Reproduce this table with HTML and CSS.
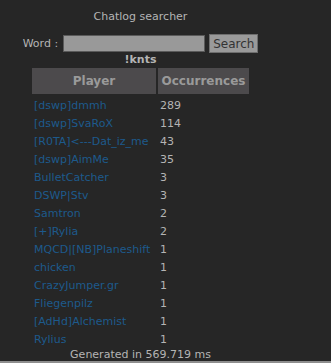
FILE: index.html
```html
<!DOCTYPE html>
<html lang="en">
<head>
    <meta charset="UTF-8">
    <title>Chatlog searcher</title>
    <link rel="stylesheet" href="styles.css">
</head>
<body>
    <div class="page">
        <div class="title">Chatlog searcher</div>
        <form class="search">
            <label for="word">Word :</label>
            <input type="text" id="word" name="word">
            <button type="submit">Search</button>
        </form>
        <div class="query">!knts</div>
        <table class="results">
            <thead>
                <tr><th class="player">Player</th><th class="count">Occurrences</th></tr>
            </thead>
            <tbody>
                <tr><td><a href="#">[dswp]dmmh</a></td><td>289</td></tr>
                <tr><td><a href="#">[dswp]SvaRoX</a></td><td>114</td></tr>
                <tr><td><a href="#">[R0TA]&lt;---Dat_iz_me</a></td><td>43</td></tr>
                <tr><td><a href="#">[dswp]AimMe</a></td><td>35</td></tr>
                <tr><td><a href="#">BulletCatcher</a></td><td>3</td></tr>
                <tr><td><a href="#">DSWP|Stv</a></td><td>3</td></tr>
                <tr><td><a href="#">Samtron</a></td><td>2</td></tr>
                <tr><td><a href="#">[+]Rylia</a></td><td>2</td></tr>
                <tr><td><a href="#">MQCD|[NB]Planeshift</a></td><td>1</td></tr>
                <tr><td><a href="#">chicken</a></td><td>1</td></tr>
                <tr><td><a href="#">CrazyJumper.gr</a></td><td>1</td></tr>
                <tr><td><a href="#">Fliegenpilz</a></td><td>1</td></tr>
                <tr><td><a href="#">[AdHd]Alchemist</a></td><td>1</td></tr>
                <tr><td><a href="#">Rylius</a></td><td>1</td></tr>
            </tbody>
        </table>
        <div class="footer">Generated in 569.719 ms</div>
    </div>
</body>
</html>
```

FILE: styles.css
```css
html, body {
    height: 100%;
}

body {
    margin: 0;
    box-sizing: border-box;
    border-bottom: 2px solid #8e8e8e;
    background-color: #262626;
    color: #b4b4b4;
    font-family: "DejaVu Sans", Verdana, sans-serif;
    font-size: 11px;
    overflow: hidden;
}

.page {
    width: 281px;
    padding-top: 10px;
    text-align: center;
}

.title {
    line-height: 13px;
    margin-bottom: 11px;
}

.search {
    display: flex;
    align-items: center;
    justify-content: center;
    margin: 0;
}

.search label {
    margin-right: 5px;
}

.search input {
    width: 138px;
    height: 13px;
    padding: 1px;
    margin: 0 4px 0 0;
    border: 1px solid #5a5a5a;
    background-color: #999;
}

.search button {
    height: 19px;
    padding: 0 3px;
    border: 1px solid #6e6e6e;
    background-color: #9a9a9a;
    color: #333;
    font-family: inherit;
    font-size: 12px;
}

.query {
    font-weight: bold;
    line-height: 13px;
}

.results {
    margin: 0 auto;
    border-spacing: 2px;
    text-align: left;
}

.results th {
    height: 26px;
    padding: 0 2px;
    background-color: #4c4a4c;
    color: #9a9a9a;
    font-size: 12px;
    text-align: center;
}

.results th.player {
    width: 120px;
}

.results th.count {
    width: 87px;
}

.results td {
    height: 14px;
    padding: 2px 2px 0;
    line-height: 13px;
    white-space: nowrap;
}

.results a {
    color: #1d5a8c;
    text-decoration: none;
}

.footer {
    line-height: 13px;
}
```
